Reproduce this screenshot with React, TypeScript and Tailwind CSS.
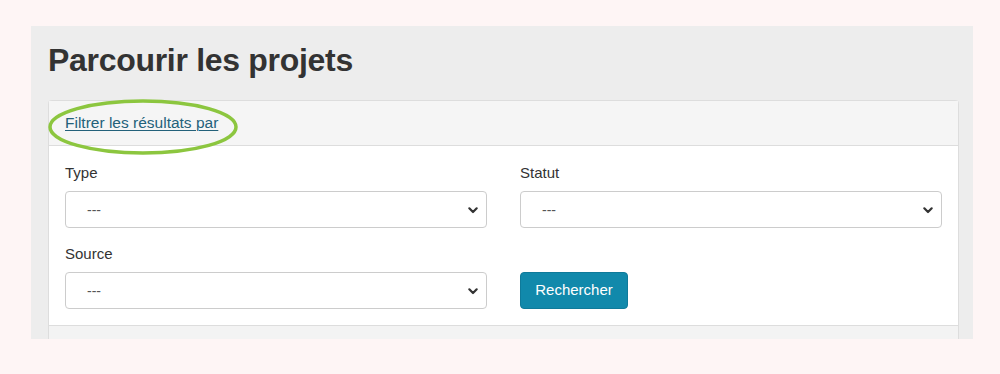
import React from "react";

function Chevron() {
  return (
    <svg width="12" height="12" viewBox="0 0 12 12" className="absolute right-[7px] top-1/2 -translate-y-1/2">
      <path d="M2.3 4.3 L6 8 L9.7 4.3" fill="none" stroke="#333" strokeWidth="2.2" strokeLinecap="round" strokeLinejoin="round" />
    </svg>
  );
}

function FakeSelect() {
  return (
    <div className="relative h-[37px] w-full rounded-[4px] border border-[#cccccc] bg-white">
      <span className="absolute left-[21px] top-1/2 -translate-y-1/2 text-[14px] text-[#555]">---</span>
      <Chevron />
    </div>
  );
}

export default function App() {
  return (
    <div className="h-[374px] w-[1000px] bg-[#fef5f5] pt-[26px] pl-[31px]" style={{ fontFamily: '"Liberation Sans", Arial, sans-serif' }}>
      <div className="flex h-[313px] w-[942px] flex-col bg-[#ededed] pl-[17px] pr-[14px]">
        <h1 className="mt-[16px] h-[58px] text-[32px] font-bold leading-[36px] tracking-[-0.3px] text-[#333]">Parcourir les projets</h1>
        <div className="relative flex flex-1 flex-col rounded-t-[4px] border border-b-0 border-[#dddddd] bg-white">
          <div className="flex h-[45px] items-center border-b border-[#dddddd] bg-[#f5f5f5] px-[16px]">
            <a href="#" className="text-[15.5px] text-[#23617a] underline decoration-1 underline-offset-2">Filtrer les résultats par</a>
          </div>
          <svg className="absolute left-[-1px] top-[-3px]" width="192" height="58" viewBox="0 0 192 58">
            <ellipse cx="95" cy="29" rx="93" ry="26" fill="none" stroke="#8cc63f" strokeWidth="3.5" />
          </svg>
          <div className="grid grid-cols-2 gap-x-[33px] px-[16px] pt-[18px]">
            <div>
              <div className="mb-[9px] text-[15px] leading-[18px] text-[#333]">Type</div>
              <FakeSelect />
            </div>
            <div>
              <div className="mb-[9px] text-[15px] leading-[18px] text-[#333]">Statut</div>
              <FakeSelect />
            </div>
            <div className="mt-[17px]">
              <div className="mb-[9px] text-[15px] leading-[18px] text-[#333]">Source</div>
              <FakeSelect />
            </div>
            <div className="mt-[17px] flex items-end">
              <button className="h-[37px] w-[108px] rounded-[4px] border border-[#0f7a9a] bg-[#1189ab] text-[15px] text-white">Rechercher</button>
            </div>
          </div>
          <div className="mt-auto h-[14px] border-t border-[#dddddd] bg-[#f3f3f3]" />
        </div>
      </div>
    </div>
  );
}
